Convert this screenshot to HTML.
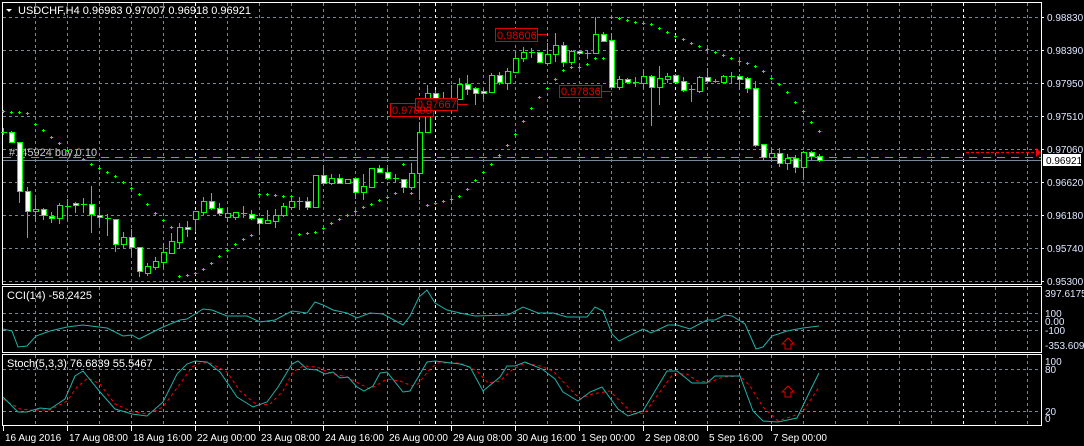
<!DOCTYPE html>
<html><head><meta charset="utf-8"><style>
html,body{margin:0;padding:0;background:#000;width:1084px;height:446px;overflow:hidden}
svg{display:block}
text{font-family:"Liberation Sans",sans-serif;font-size:11px}
.s{font-size:10px}
</style></head><body>
<svg width="1084" height="446" viewBox="0 0 1084 446" xmlns="http://www.w3.org/2000/svg">
<rect width="1084" height="446" fill="#000"/>
<g stroke="#778899" stroke-dasharray="3,3" shape-rendering="crispEdges">
<path d="M35.5 3V284M67.5 3V284M99.5 3V284M131.5 3V284M163.5 3V284M227.5 3V284M259.5 3V284M291.5 3V284M323.5 3V284M355.5 3V284M387.5 3V284M419.5 3V284M451.5 3V284M483.5 3V284M515.5 3V284M547.5 3V284M579.5 3V284M611.5 3V284M643.5 3V284M707.5 3V284M739.5 3V284M771.5 3V284M803.5 3V284M835.5 3V284M867.5 3V284M899.5 3V284M931.5 3V284M995.5 3V284M1027.5 3V284"/>
<path d="M35.5 287V352M67.5 287V352M99.5 287V352M131.5 287V352M163.5 287V352M227.5 287V352M259.5 287V352M291.5 287V352M323.5 287V352M355.5 287V352M387.5 287V352M419.5 287V352M451.5 287V352M483.5 287V352M515.5 287V352M547.5 287V352M579.5 287V352M611.5 287V352M643.5 287V352M707.5 287V352M739.5 287V352M771.5 287V352M803.5 287V352M835.5 287V352M867.5 287V352M899.5 287V352M931.5 287V352M995.5 287V352M1027.5 287V352"/>
<path d="M35.5 355V425M67.5 355V425M99.5 355V425M131.5 355V425M163.5 355V425M227.5 355V425M259.5 355V425M291.5 355V425M323.5 355V425M355.5 355V425M387.5 355V425M419.5 355V425M451.5 355V425M483.5 355V425M515.5 355V425M547.5 355V425M579.5 355V425M611.5 355V425M643.5 355V425M707.5 355V425M739.5 355V425M771.5 355V425M803.5 355V425M835.5 355V425M867.5 355V425M899.5 355V425M931.5 355V425M995.5 355V425M1027.5 355V425"/>
<path d="M3 17.5H1041M3 50.5H1041M3 83.5H1041M3 116.5H1041M3 149.5H1041M3 182.5H1041M3 215.5H1041M3 248.5H1041M3 281.5H1041"/>
<path d="M3 313.5H1041M3 321.5H1041M3 330.5H1041M3 369.5H1041M3 411.5H1041"/>
</g>
<g stroke="#fff" stroke-dasharray="3,3" shape-rendering="crispEdges">
<path d="M195.5 3V284M435.5 3V284M675.5 3V284M963.5 3V284M195.5 287V352M435.5 287V352M675.5 287V352M963.5 287V352M195.5 355V425M435.5 355V425M675.5 355V425M963.5 355V425"/>
</g>
<g fill="none" stroke="#fff" shape-rendering="crispEdges">
<rect x="2.5" y="2.5" width="1039" height="282"/>
<rect x="2.5" y="286.5" width="1039" height="66"/>
<rect x="2.5" y="354.5" width="1039" height="71"/>
</g>
<path d="M3 157.5H1041" stroke="#32cd32" stroke-dasharray="8,6" shape-rendering="crispEdges"/>
<path d="M3 160.5H1041" stroke="#778899" shape-rendering="crispEdges"/>
<path d="M966 152.5H1036" stroke="#f00" stroke-dasharray="3,2" shape-rendering="crispEdges"/>
<path d="M1036 148L1041 152.5L1036 157Z" fill="#f00"/>
<text x="9" y="156" fill="#c8c8c8">#145924 buy 0.10</text>
<path stroke="#00ff00" fill="none" shape-rendering="crispEdges" d="M2 111.5h3M3.5 110v3M10 112.5h3M11.5 111v3M18 112.5h3M19.5 111v3M26 113.5h3M27.5 112v3M34 124.5h3M35.5 123v3M42 130.5h3M43.5 129v3M50 137.5h3M51.5 136v3M58 143.5h3M59.5 142v3M66 150.5h3M67.5 149v3M74 155.5h3M75.5 154v3M82 159.5h3M83.5 158v3M90 164.5h3M91.5 163v3M98 168.5h3M99.5 167v3M106 172.5h3M107.5 171v3M114 176.5h3M115.5 175v3M122 182.5h3M123.5 181v3M130 188.5h3M131.5 187v3M138 194.5h3M139.5 193v3M146 204.5h3M147.5 203v3M154 213.5h3M155.5 212v3M162 220.5h3M163.5 219v3M170 227.5h3M171.5 226v3M178 276.5h3M179.5 275v3M186 275.5h3M187.5 274v3M194 273.5h3M195.5 272v3M202 269.5h3M203.5 268v3M210 263.5h3M211.5 262v3M218 256.5h3M219.5 255v3M226 250.5h3M227.5 249v3M234 244.5h3M235.5 243v3M242 239.5h3M243.5 238v3M250 235.5h3M251.5 234v3M258 194.5h3M259.5 193v3M266 194.5h3M267.5 193v3M274 195.5h3M275.5 194v3M282 196.5h3M283.5 195v3M290 196.5h3M291.5 195v3M298 234.5h3M299.5 233v3M306 233.5h3M307.5 232v3M314 232.5h3M315.5 231v3M322 228.5h3M323.5 227v3M330 223.5h3M331.5 222v3M338 219.5h3M339.5 218v3M346 215.5h3M347.5 214v3M354 211.5h3M355.5 210v3M362 207.5h3M363.5 206v3M370 204.5h3M371.5 203v3M378 200.5h3M379.5 199v3M386 197.5h3M387.5 196v3M394 193.5h3M395.5 192v3M402 164.5h3M403.5 163v3M410 193.5h3M411.5 192v3M418 163.5h3M419.5 162v3M426 205.5h3M427.5 204v3M434 203.5h3M435.5 202v3M442 201.5h3M443.5 200v3M450 199.5h3M451.5 198v3M458 196.5h3M459.5 195v3M466 189.5h3M467.5 188v3M474 180.5h3M475.5 179v3M482 172.5h3M483.5 171v3M490 164.5h3M491.5 163v3M498 155.5h3M499.5 154v3M506 145.5h3M507.5 144v3M514 134.5h3M515.5 133v3M522 121.5h3M523.5 120v3M530 108.5h3M531.5 107v3M538 97.5h3M539.5 96v3M546 88.5h3M547.5 87v3M554 79.5h3M555.5 78v3M562 70.5h3M563.5 69v3M570 67.5h3M571.5 66v3M578 67.5h3M579.5 66v3M586 64.5h3M587.5 63v3M594 58.5h3M595.5 57v3M602 58.5h3M603.5 57v3M610 17.5h3M611.5 16v3M618 18.5h3M619.5 17v3M626 20.5h3M627.5 19v3M634 22.5h3M635.5 21v3M642 23.5h3M643.5 22v3M650 24.5h3M651.5 23v3M658 28.5h3M659.5 27v3M666 32.5h3M667.5 31v3M674 36.5h3M675.5 35v3M682 39.5h3M683.5 38v3M690 43.5h3M691.5 42v3M698 46.5h3M699.5 45v3M706 49.5h3M707.5 48v3M714 52.5h3M715.5 51v3M722 55.5h3M723.5 54v3M730 58.5h3M731.5 57v3M738 61.5h3M739.5 60v3M746 63.5h3M747.5 62v3M754 66.5h3M755.5 65v3M762 71.5h3M763.5 70v3M770 78.5h3M771.5 77v3M778 84.5h3M779.5 83v3M786 92.5h3M787.5 91v3M794 102.5h3M795.5 101v3M802 111.5h3M803.5 110v3M810 122.5h3M811.5 121v3M818 131.5h3M819.5 130v3"/>
<path stroke="#00ff00" fill="none" shape-rendering="crispEdges" d="M3.5 128V135M11.5 131V143M19.5 142V203M27.5 187V238M35.5 198V222M43.5 208V220M51.5 212V223M59.5 203V224M67.5 199V220M75.5 202V213M83.5 198V213M91.5 186V233M99.5 207V227M107.5 214V236M115.5 219V252M123.5 232V248M131.5 229V256M139.5 247V277M147.5 263V276M155.5 257V270M163.5 243V268M171.5 233V254M179.5 223V249M187.5 221V237M195.5 211V232M203.5 197V215M211.5 193V210M219.5 203V215M227.5 207V222M235.5 212V220M243.5 206V218M251.5 210V220M259.5 218V235M267.5 210V224M275.5 209V228M283.5 203V217M291.5 197V210M299.5 197V210M307.5 197V210M315.5 175V207M323.5 165V184M331.5 174V185M339.5 174V184M347.5 179V184M355.5 178V199M363.5 174V200M371.5 168V187M379.5 165V173M387.5 168V180M395.5 174V182M403.5 179V193M411.5 163V190M419.5 122V200M427.5 85V132M435.5 90V110M443.5 92V105M451.5 85V107M459.5 78V100M467.5 75V95M475.5 87V105M483.5 89V99M491.5 73V93M499.5 72V85M507.5 68V90M515.5 52V73M523.5 47V62M531.5 48V58M539.5 52V63M547.5 43V65M555.5 33V62M563.5 42V67M571.5 50V65M579.5 50V55M587.5 50V59M595.5 17V53M603.5 32V42M611.5 33V87M619.5 76V90M627.5 78V83M635.5 77V87M643.5 70V88M651.5 75V126M659.5 66V105M667.5 73V83M675.5 74V83M683.5 77V92M691.5 85V102M699.5 76V93M707.5 68V83M715.5 79V83M723.5 75V83M731.5 72V84M739.5 74V90M747.5 77V93M755.5 81V147M763.5 144V160M771.5 148V162M779.5 148V167M787.5 154V170M795.5 155V173M803.5 151V178M811.5 151V160M819.5 154V162"/>
<path stroke="#00ff00" shape-rendering="crispEdges" d="M1 132.5h6M65 206.5h6M81 204.5h6M105 218.5h6M241 213.5h6M297 201.5h6M393 178.5h6M529 52.5h6M585 53.5h6M633 82.5h6M689 89.5h6M713 81.5h6M729 76.5h6"/>
<g fill="#000" stroke="#00ff00" shape-rendering="crispEdges">
<rect x="33.5" y="209.5" width="5" height="2"/><rect x="57.5" y="205.5" width="5" height="13"/><rect x="121.5" y="237.5" width="5" height="7"/><rect x="145.5" y="266.5" width="5" height="7"/><rect x="153.5" y="261.5" width="5" height="6"/><rect x="161.5" y="252.5" width="5" height="10"/><rect x="169.5" y="241.5" width="5" height="12"/><rect x="177.5" y="227.5" width="5" height="15"/><rect x="193.5" y="211.5" width="5" height="8"/><rect x="201.5" y="201.5" width="5" height="11"/><rect x="225.5" y="213.5" width="5" height="4"/><rect x="233.5" y="212.5" width="5" height="5"/><rect x="265.5" y="220.5" width="5" height="3"/><rect x="273.5" y="215.5" width="5" height="6"/><rect x="281.5" y="206.5" width="5" height="9"/><rect x="289.5" y="201.5" width="5" height="6"/><rect x="313.5" y="175.5" width="5" height="32"/><rect x="329.5" y="178.5" width="5" height="5"/><rect x="345.5" y="179.5" width="5" height="4"/><rect x="361.5" y="186.5" width="5" height="6"/><rect x="369.5" y="168.5" width="5" height="19"/><rect x="409.5" y="173.5" width="5" height="14"/><rect x="417.5" y="132.5" width="5" height="41"/><rect x="425.5" y="93.5" width="5" height="39"/><rect x="449.5" y="98.5" width="5" height="4"/><rect x="457.5" y="84.5" width="5" height="15"/><rect x="489.5" y="75.5" width="5" height="17"/><rect x="505.5" y="71.5" width="5" height="12"/><rect x="513.5" y="58.5" width="5" height="14"/><rect x="521.5" y="52.5" width="5" height="6"/><rect x="545.5" y="54.5" width="5" height="9"/><rect x="553.5" y="45.5" width="5" height="9"/><rect x="569.5" y="51.5" width="5" height="11"/><rect x="593.5" y="34.5" width="5" height="19"/><rect x="617.5" y="79.5" width="5" height="8"/><rect x="641.5" y="76.5" width="5" height="7"/><rect x="657.5" y="78.5" width="5" height="9"/><rect x="665.5" y="76.5" width="5" height="3"/><rect x="697.5" y="77.5" width="5" height="14"/><rect x="721.5" y="76.5" width="5" height="6"/><rect x="769.5" y="153.5" width="5" height="4"/><rect x="785.5" y="158.5" width="5" height="5"/><rect x="801.5" y="152.5" width="5" height="15"/>
</g>
<g fill="#fff" stroke="#00ff00" shape-rendering="crispEdges">
<rect x="9.5" y="132.5" width="5" height="10"/><rect x="17.5" y="142.5" width="5" height="49"/><rect x="25.5" y="191.5" width="5" height="20"/><rect x="41.5" y="209.5" width="5" height="6"/><rect x="49.5" y="216.5" width="5" height="2"/><rect x="73.5" y="203.5" width="5" height="2"/><rect x="89.5" y="204.5" width="5" height="10"/><rect x="97.5" y="215.5" width="5" height="2"/><rect x="113.5" y="219.5" width="5" height="25"/><rect x="129.5" y="237.5" width="5" height="10"/><rect x="137.5" y="247.5" width="5" height="24"/><rect x="185.5" y="227.5" width="5" height="2"/><rect x="209.5" y="201.5" width="5" height="7"/><rect x="217.5" y="208.5" width="5" height="5"/><rect x="249.5" y="214.5" width="5" height="4"/><rect x="257.5" y="218.5" width="5" height="5"/><rect x="305.5" y="201.5" width="5" height="6"/><rect x="321.5" y="175.5" width="5" height="8"/><rect x="337.5" y="178.5" width="5" height="5"/><rect x="353.5" y="178.5" width="5" height="14"/><rect x="377.5" y="168.5" width="5" height="4"/><rect x="385.5" y="172.5" width="5" height="6"/><rect x="401.5" y="179.5" width="5" height="8"/><rect x="433.5" y="93.5" width="5" height="6"/><rect x="441.5" y="99.5" width="5" height="2"/><rect x="465.5" y="84.5" width="5" height="5"/><rect x="473.5" y="88.5" width="5" height="5"/><rect x="481.5" y="91.5" width="5" height="2"/><rect x="497.5" y="75.5" width="5" height="7"/><rect x="537.5" y="52.5" width="5" height="10"/><rect x="561.5" y="45.5" width="5" height="17"/><rect x="577.5" y="51.5" width="5" height="2"/><rect x="601.5" y="34.5" width="5" height="7"/><rect x="609.5" y="40.5" width="5" height="47"/><rect x="625.5" y="79.5" width="5" height="3"/><rect x="649.5" y="76.5" width="5" height="11"/><rect x="673.5" y="75.5" width="5" height="7"/><rect x="681.5" y="81.5" width="5" height="9"/><rect x="705.5" y="77.5" width="5" height="4"/><rect x="737.5" y="76.5" width="5" height="3"/><rect x="745.5" y="78.5" width="5" height="10"/><rect x="753.5" y="88.5" width="5" height="57"/><rect x="761.5" y="144.5" width="5" height="13"/><rect x="777.5" y="153.5" width="5" height="10"/><rect x="793.5" y="158.5" width="5" height="9"/><rect x="809.5" y="152.5" width="5" height="4"/><rect x="817.5" y="156.5" width="5" height="4"/>
</g>
<g fill="#000" stroke="#e00000" shape-rendering="crispEdges">
<rect x="390.5" y="103.5" width="43" height="13"/><path d="M433 110.5H443"/>
<rect x="415.5" y="98.5" width="42" height="12"/><path d="M457 104.5H468"/>
<rect x="495.5" y="28.5" width="42" height="13"/><path d="M537 34.5H547"/>
<rect x="559.5" y="85.5" width="42" height="12"/><path d="M601 91.5H611"/>
</g>
<g fill="#e00000">
<text x="392" y="114">0.97800</text>
<text x="417" y="108">0.97667</text>
<text x="497" y="39">0.98606</text>
<text x="561" y="95">0.97836</text>
</g>
<path d="M6 9H12L9 12Z" fill="#fff"/>
<text x="18" y="14" fill="#fff">USDCHF,H4  0.96983 0.97007 0.96918 0.96921</text>
<g fill="#dfe6ff" class="s">
<text class="s" x="1047" y="21">0.98830</text><text class="s" x="1047" y="54">0.98390</text><text class="s" x="1047" y="87">0.97950</text><text class="s" x="1047" y="120">0.97510</text><text class="s" x="1047" y="153">0.97060</text><text class="s" x="1047" y="186">0.96620</text><text class="s" x="1047" y="219">0.96180</text><text class="s" x="1047" y="252">0.95740</text><text class="s" x="1047" y="285">0.95300</text>
<text class="s" x="1045" y="297">397.6175</text><text class="s" x="1045" y="317">100</text><text class="s" x="1045" y="325">0.00</text><text class="s" x="1045" y="334">-100</text><text class="s" x="1045" y="349">-353.6091</text>
<text class="s" x="1045" y="365">100</text><text class="s" x="1045" y="373">80</text><text class="s" x="1045" y="415">20</text><text class="s" x="1045" y="422">0</text>
</g>
<g stroke="#fff" shape-rendering="crispEdges"><path d="M1041 17.5h3M1041 50.5h3M1041 83.5h3M1041 116.5h3M1041 149.5h3M1041 182.5h3M1041 215.5h3M1041 248.5h3M1041 281.5h3"/></g>
<rect x="1043" y="154" width="38" height="12" fill="#fff"/>
<text class="s" x="1046" y="164" fill="#000">0.96921</text>
<text x="7" y="299" fill="#fff">CCI(14) -58.2425</text>
<polyline fill="none" stroke="#20b2aa" points="3,329 12,331 18,347 27,346 36,336 50,331 67,327 83,325 107,328 123,336 132,335 139,339 163,327 180,320 187,319 203,309 212,310 227,316 247,316 260,322 275,320 292,311 307,313 315,302 323,305 333,310 347,313 357,318 370,313 383,314 403,325 410,316 419,297 427,290 435,303 447,310 460,313 475,316 508,315 523,307 538,313 553,313 567,317 587,317 595,307 603,311 612,334 619,341 643,329 651,333 668,325 677,325 690,329 707,320 715,320 725,315 732,316 745,324 756,349 763,347 772,336 787,331 803,328 819,326"/>
<path d="M788 338L782 344H785V349H791V344H794Z" fill="none" stroke="#e00000"/>
<text x="7" y="367" fill="#fff">Stoch(5,3,3) 76.6839 55.5467</text>
<polyline fill="none" stroke="#f00" stroke-dasharray="3,3" points="3,399 20,409 30,410 50,410 67,401 77,387 88,378 100,384 115,404 133,412 148,414 163,407 180,384 192,367 200,363 210,363 227,372 240,391 257,405 270,404 283,391 293,372 303,366 317,367 330,373 347,377 360,384 370,389 387,379 400,381 412,386 418,384 430,369 438,363 460,363 477,371 488,383 500,381 513,369 525,363 540,366 553,371 570,389 580,399 592,394 610,391 623,404 633,414 645,413 657,396 673,374 687,374 697,381 710,382 723,377 740,376 750,386 763,407 778,421 802,413 819,387"/>
<polyline fill="none" stroke="#20b2aa" points="3,397 18,412 27,412 40,408 50,409 65,399 75,376 83,371 100,392 115,409 132,414 147,416 163,402 177,374 187,364 195,361 207,362 220,372 237,397 253,407 267,402 278,387 292,364 298,361 307,369 317,370 325,374 333,372 340,378 348,377 357,387 364,391 373,386 380,373 387,372 403,392 410,391 427,362 435,361 460,364 470,367 483,391 500,377 507,366 515,366 525,362 542,369 555,379 563,392 578,401 590,392 602,387 618,409 628,416 643,411 667,371 677,371 692,383 707,383 715,376 740,376 753,411 763,421 778,422 797,418 810,391 819,373"/>
<path d="M788 386L782 392H785V397H791V392H794Z" fill="none" stroke="#e00000"/>
<g stroke="#fff" shape-rendering="crispEdges"><path d="M3.5 426V431M67.5 426V431M131.5 426V431M195.5 426V431M259.5 426V431M323.5 426V431M387.5 426V431M451.5 426V431M515.5 426V431M579.5 426V431M643.5 426V431M707.5 426V431M771.5 426V431"/></g>
<g fill="#fff">
<text class="s" x="5" y="441">16 Aug 2016</text><text class="s" x="69" y="441">17 Aug 08:00</text><text class="s" x="133" y="441">18 Aug 16:00</text><text class="s" x="197" y="441">22 Aug 00:00</text><text class="s" x="261" y="441">23 Aug 08:00</text><text class="s" x="325" y="441">24 Aug 16:00</text><text class="s" x="389" y="441">26 Aug 00:00</text><text class="s" x="453" y="441">29 Aug 08:00</text><text class="s" x="517" y="441">30 Aug 16:00</text><text class="s" x="581" y="441">1 Sep 00:00</text><text class="s" x="645" y="441">2 Sep 08:00</text><text class="s" x="709" y="441">5 Sep 16:00</text><text class="s" x="773" y="441">7 Sep 00:00</text>
</g>
</svg>
</body></html>
